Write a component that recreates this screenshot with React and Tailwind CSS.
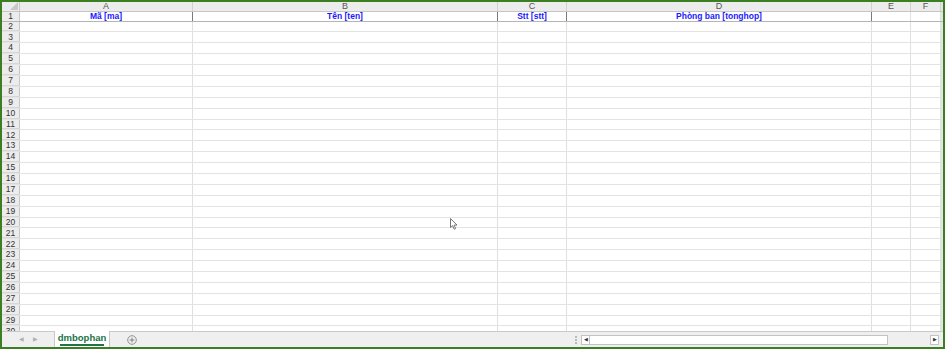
import React from 'react';

const cols = [
  { key: 'A', w: 'w-[173px]', title: 'Mã [ma]' },
  { key: 'B', w: 'w-[305px]', title: 'Tên [ten]' },
  { key: 'C', w: 'w-[69px]', title: 'Stt [stt]' },
  { key: 'D', w: 'w-[305px]', title: 'Phòng ban [tonghop]' },
  { key: 'E', w: 'w-[39px]', title: '' },
  { key: 'F', w: 'w-[30px]', title: '' },
];

const rows = Array.from({ length: 29 }, (_, i) => i + 2);

const HeaderRow = () => (
  <div className="flex h-[11px] bg-[#ececec] border-b border-[#c6c6c6]">
    <div className="relative w-[18px] shrink-0 border-r border-[#c6c6c6]">
      <div className="absolute right-[1px] bottom-[1px] w-0 h-0 border-l-[8px] border-l-transparent border-b-[8px] border-b-[#c8c8c8]" />
    </div>
    {cols.map((c) => (
      <div
        key={c.key}
        className={`${c.w} shrink-0 border-r border-[#d2d2d2] flex items-center justify-center text-[9px] leading-none text-[#555]`}
      >
        {c.key}
      </div>
    ))}
    <div className="flex-1 bg-[#e4e4e4]" />
  </div>
);

const TitleRow = () => (
  <div className="flex h-[11px] border-b border-[#b5b5b5]">
    <div className="w-[18px] shrink-0 bg-[#ececec] border-r border-[#c6c6c6] flex items-center justify-center text-[8.5px] leading-none text-[#333]">
      1
    </div>
    {cols.map((c, i) => (
      <div
        key={c.key}
        className={`${c.w} shrink-0 ${i < 4 ? 'border-r border-[#7a7a7a]' : 'border-r border-[#e0e0e0]'} flex items-center justify-center text-[8.5px] font-bold leading-none text-[#1a1aff]`}
      >
        {c.title}
      </div>
    ))}
    <div className="flex-1 bg-[#e4e4e4]" />
  </div>
);

const Row = ({ n }) => (
  <div className="flex h-[10.9px] shrink-0 border-b border-[#e3e3e3]">
    <div className="w-[18px] shrink-0 bg-[#ececec] border-r border-[#c6c6c6] border-b border-b-[#d6d6d6] flex items-center justify-center text-[8.5px] leading-none text-[#333]">
      {n}
    </div>
    {cols.map((c) => (
      <div key={c.key} className={`${c.w} shrink-0 border-r border-[#e0e0e0]`} />
    ))}
    <div className="flex-1 bg-[#e4e4e4]" />
  </div>
);

const Cursor = () => (
  <svg className="absolute left-[448px] top-[216px]" width="8" height="12" viewBox="0 0 8 12">
    <path d="M0.5 0.5 L0.5 9.5 L2.6 7.6 L4.2 11.2 L5.6 10.6 L4.1 7.1 L7 7.1 Z" fill="#fff" stroke="#666" strokeWidth="0.9" />
  </svg>
);

export default function App() {
  return (
    <div className="w-[946px] h-[350px] bg-white" style={{ fontFamily: '"Liberation Sans", Arial, sans-serif' }}>
      <div className="w-[945px] h-[349px] border-2 border-[#3c7f22] flex flex-col overflow-hidden">
        <div className="relative h-[329px] overflow-hidden flex flex-col">
          <HeaderRow />
          <TitleRow />
          {rows.map((n) => (
            <Row key={n} n={n} />
          ))}
          <Cursor />
        </div>
        <div className="flex items-stretch h-[16px] bg-[#efefef] border-t border-[#c9c9c9]">
          <div className="w-[52px] flex items-center justify-center gap-[9px] text-[6px] text-[#b0b0b0]">
            <span>◀</span>
            <span>▶</span>
          </div>
          <div className="w-[56px] -mt-px bg-white border-x border-[#c9c9c9] flex flex-col items-center justify-center">
            <span className="text-[9.5px] font-bold leading-none text-[#217346]">dmbophan</span>
            <span className="mt-[2px] h-[1.5px] w-[44px] bg-[#217346]" />
          </div>
          <div className="w-[44px] flex items-center justify-center">
            <svg width="10" height="10" viewBox="0 0 10 10">
              <circle cx="5" cy="5" r="4.3" fill="none" stroke="#888" strokeWidth="0.9" />
              <path d="M5 2.6 V7.4 M2.6 5 H7.4" stroke="#777" strokeWidth="0.9" />
            </svg>
          </div>
          <div className="w-[418px]" />
          <div className="w-[8px] flex flex-col items-center justify-center gap-[1px]">
            <span className="w-[2px] h-[2px] bg-[#bbb]" />
            <span className="w-[2px] h-[2px] bg-[#bbb]" />
            <span className="w-[2px] h-[2px] bg-[#bbb]" />
          </div>
          <div className="flex items-center ml-[1px] gap-0">
            <div className="w-[9px] h-[10px] bg-white border border-[#c3c3c3] flex items-center justify-center text-[5px] text-[#333]">◀</div>
            <div className="w-[298px] h-[10px] bg-white border border-[#c3c3c3] border-l-0" />
            <div className="w-[42px]" />
            <div className="w-[9px] h-[10px] bg-white border border-[#c3c3c3] flex items-center justify-center text-[5px] text-[#333]">▶</div>
          </div>
        </div>
      </div>
    </div>
  );
}
